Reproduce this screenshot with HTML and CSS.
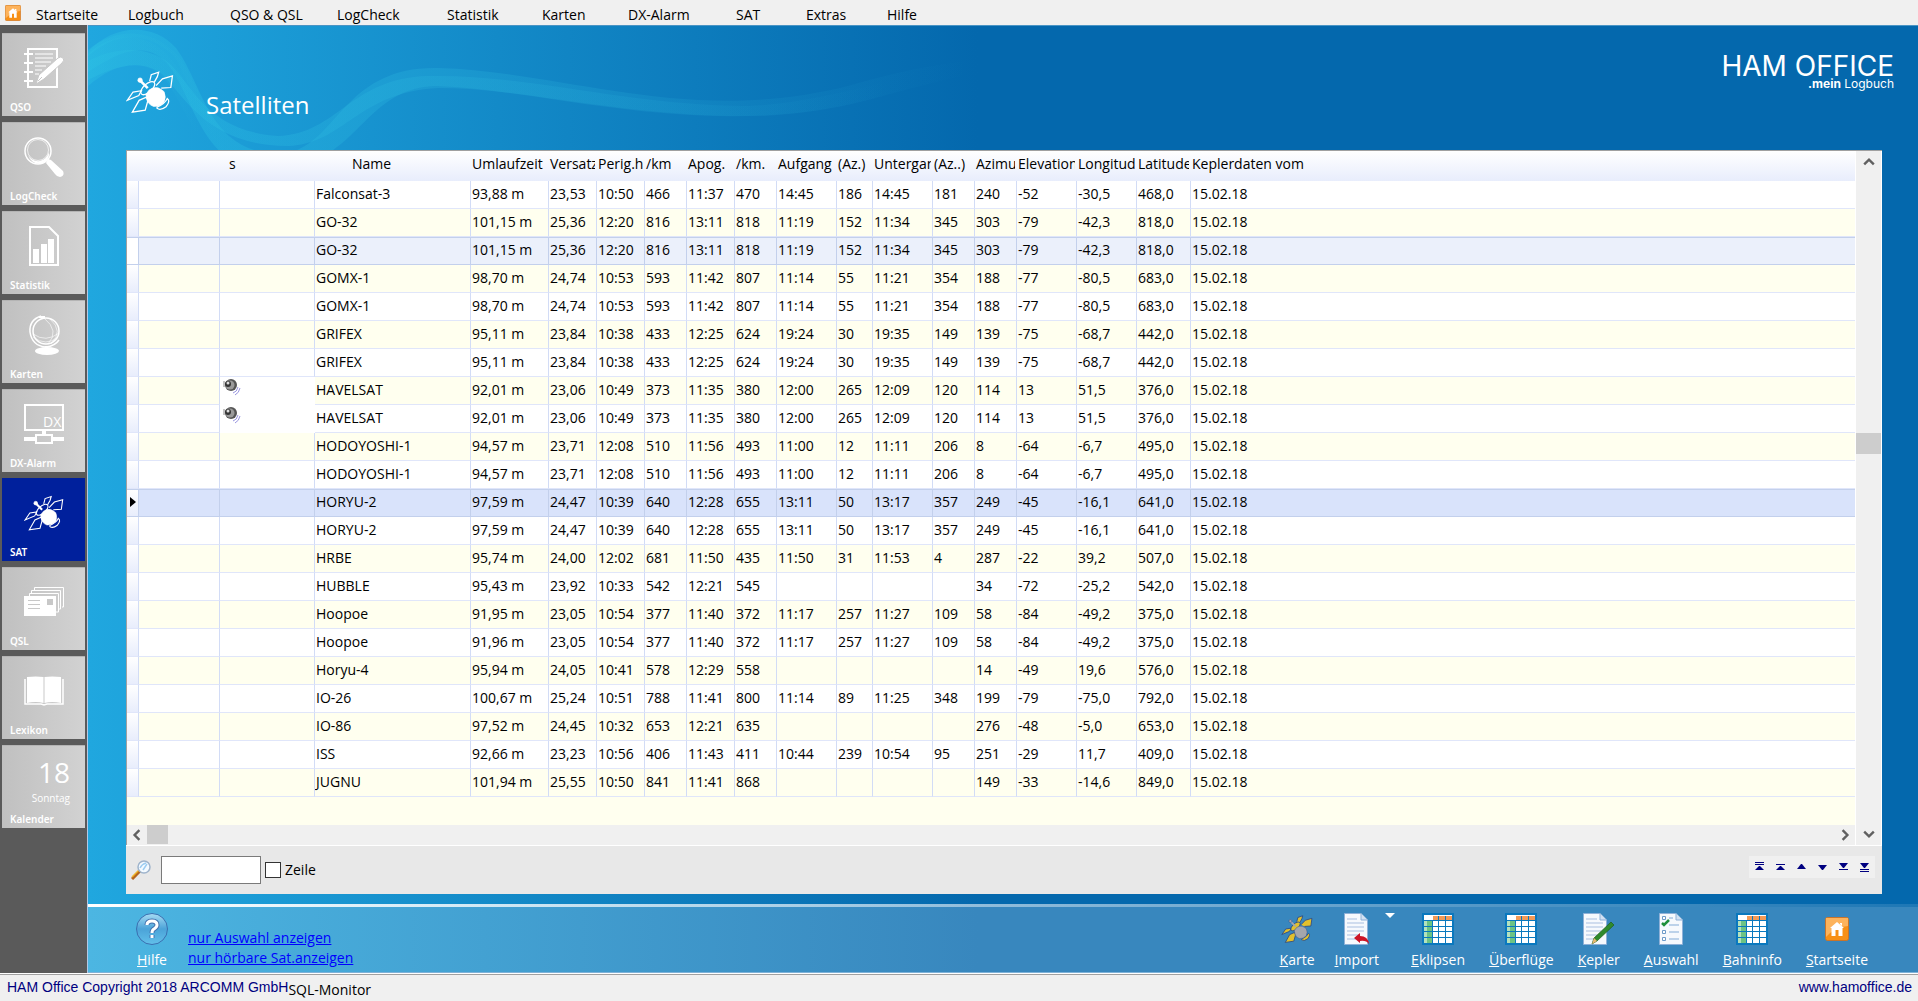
FILE: index.html
```
<!DOCTYPE html>
<html lang="de">
<head>
  <meta charset="UTF-8">
  <meta name="viewport" content="width=device-width, initial-scale=1.0">
  <title>HAM Office - Satelliten</title>
  <link rel="stylesheet" href="styles.css">
</head>

<body>
  <!-- shared icons -->
  <svg class="sprite" aria-hidden="true">
    <symbol id="sat" viewBox="16 24 150 136">
      <g class="sat-panel">
        <path d="M90 58L95 38L118 30L114 44L104 62"/>
        <path d="M110 72L130 51L161 42L156 78L126 80"/>
        <path d="M20 118L38 92L64 88L56 103Z"/>
        <path d="M36 155L57 118L80 108L84 120L76 149Z"/>
        <path d="M113 139Q138 128 145 112Q156 120 141 138Q124 151 113 143Z"/>
      </g>
      <ellipse class="sat-panel" cx="84" cy="80" rx="27" ry="13" transform="rotate(-42 84 80)"/>
      <path class="sat-body" d="M78 100L88 86Q100 76 116 79Q126 83 135 91Q143 108 134 125Q120 139 102 137Q83 130 81 113Z"/>
      <path class="sat-arm" d="M58 54L84 80"/>
      <circle class="sat-body" cx="60" cy="55" r="7"/>
    </symbol>
    <symbol id="house" viewBox="0 0 24 24">
      <rect x="0.5" y="0.5" width="23" height="23" rx="2" fill="#f79016" stroke="#c9742a"/>
      <path d="M1 1H23V9Q10 10 1 20Z" fill="#fdb35c"/>
      <path d="M12 5L19 11H17.500V19H13.500V13H10.500V19H6.500V11H5ZM15 6H17V9L15 7Z" fill="#fff"/>
    </symbol>
    <symbol id="sheet" viewBox="0 0 32 32">
      <rect x="1" y="1" width="30" height="30" fill="#fff" stroke="#0a78be" stroke-width="2"/>
      <rect x="11" y="3" width="19" height="4" fill="#f39a56"/>
      <path d="M2 8H10V30H2Z" fill="#6cc384"/>
      <path d="M2 8H5V30H2Z" fill="#b4e2bd"/>
      <path d="M2 7.500H30M2 13.500H30M2 18.500H30M2 24.500H30" stroke="#0a78be"/>
      <path d="M10.500 8V30M16.500 3V30M23.500 3V30" stroke="#0a78be"/>
    </symbol>
    <symbol id="page" viewBox="0 0 24 32">
      <path d="M0.500 0.500H17L23.500 7V31.500H0.500Z" fill="#f6f9fd" stroke="#8fb1d8"/>
      <path d="M17 0.500V7H23.500" fill="#d3e2f3" stroke="#8fb1d8"/>
    </symbol>
    <symbol id="speaker" viewBox="0 0 18 18">
      <circle cx="8" cy="7" r="6" fill="#555"/>
      <circle cx="7" cy="7" r="4.500" fill="#9a9a9a"/>
      <circle cx="5" cy="6" r="3" fill="#333"/>
      <circle cx="5" cy="5" r="1.500" fill="#ddd"/>
      <path d="M1 3V9" stroke="#888"/>
      <path d="M10 15Q14 14 15 9M12 17Q16 15 17 10" fill="none" stroke="#9a96e0"/>
    </symbol>
  </svg>

  <nav class="menubar">
    <svg class="menu-icon"><use href="#house"/></svg>
    <a href="#">Startseite</a>
    <a href="#">Logbuch</a>
    <a href="#">QSO &amp; QSL</a>
    <a href="#">LogCheck</a>
    <a href="#">Statistik</a>
    <a href="#">Karten</a>
    <a href="#">DX-Alarm</a>
    <a href="#">SAT</a>
    <a href="#">Extras</a>
    <a href="#">Hilfe</a>
  </nav>

  <div class="workspace">
    <aside class="sidebar">
      <button class="tile">
        <svg class="tile-icon" viewBox="0 0 40 40">
          <path d="M4 1H33V39H4Z" fill="none" stroke="#fff" stroke-width="2"/>
          <path d="M0 6H9M0 15H9M0 24H9M0 33H9" stroke="#fff" stroke-width="2"/>
          <path d="M11 6H29M11 10H29M11 14H27M11 18H22M11 22H18M11 26H15" stroke="#fff"/>
          <path d="M12 36L15 27L34 10Q37 8 39 10Q41 12 38 15L20 31Z" fill="#fff" stroke="#c8c8c8"/>
          <path d="M14 33L18 29" stroke="#c8c8c8"/>
        </svg>
        <span>QSO</span>
      </button>
      <button class="tile">
        <svg class="tile-icon" viewBox="0 0 40 40">
          <circle cx="14" cy="14" r="13" fill="none" stroke="#fff" stroke-width="1.500"/>
          <circle cx="14" cy="13" r="10.500" fill="none" stroke="#fff" stroke-width="0.700"/>
          <path d="M4 18Q8 25 16 24Q23 22 25 15Q26 24 17 27Q7 27 4 18Z" fill="#fff"/>
          <path d="M24 22L27 23L39 34Q41 39 36 40Q33 40 31 37L22 26Z" fill="#fff"/>
        </svg>
        <span>LogCheck</span>
      </button>
      <button class="tile">
        <svg class="tile-icon" viewBox="0 0 40 40">
          <path d="M6 1H25L34 10V39H6Z" fill="none" stroke="#fff" stroke-width="2"/>
          <path d="M9 23H15V37H9ZM17 18H23V37H17ZM24 13H30V37H24Z" fill="#fff"/>
        </svg>
        <span>Statistik</span>
      </button>
      <button class="tile">
        <svg class="tile-icon" viewBox="0 0 40 40">
          <circle cx="22" cy="16" r="13" fill="none" stroke="#fff" stroke-width="1.500"/>
          <path d="M17 1Q5 5 6 17Q8 31 22 32Q31 31 35 25" fill="none" stroke="#fff" stroke-width="1.500"/>
          <path d="M20 3Q36 16 24 29M26 4Q40 16 27 29M9 19Q22 28 35 18M9 22Q22 32 34 22" fill="none" stroke="#fff" stroke-width="0.600"/>
          <path d="M15 2L21 2M22 31V36" stroke="#fff" stroke-width="2"/>
          <ellipse cx="23" cy="36" rx="12" ry="4" fill="#fff"/>
        </svg>
        <span>Karten</span>
      </button>
      <button class="tile">
        <svg class="tile-icon" viewBox="0 0 40 40">
          <path d="M1 1H39V26H1Z" fill="none" stroke="#fff" stroke-width="2"/>
          <path d="M20 26V32M0 35H12M28 35H40" stroke="#fff" stroke-width="4"/>
          <path d="M12 31H28V39H12Z" fill="none" stroke="#fff" stroke-width="2"/>
          <text x="19" y="23" class="dx-text">DX</text>
        </svg>
        <span>DX-Alarm</span>
      </button>
      <button class="tile active">
        <svg class="tile-icon"><use href="#sat"/></svg>
        <span>SAT</span>
      </button>
      <button class="tile">
        <svg class="tile-icon" viewBox="0 0 40 40">
          <path d="M10.500 9V5.500H39.500V25H38M7.500 12V8.500H36.500V27H35M5.500 15V11.500H34.500V30H32" fill="none" stroke="#fff"/>
          <path d="M0 14H32V34H0Z" fill="#fff"/>
          <path d="M4 18.500H16M4 22.500H16M4 26.500H16" stroke="#c8c8c8"/>
          <path d="M23 17H29V23H23Z" fill="#c8c8c8"/>
        </svg>
        <span>QSL</span>
      </button>
      <button class="tile">
        <svg class="tile-icon" viewBox="0 0 40 40">
          <path d="M1 8V33H17L20 34L23 33H39V8" fill="none" stroke="#fff" stroke-width="1.500"/>
          <path d="M3 6Q12 5 19.500 6V32Q12 30 3 32ZM37 6Q28 5 20.500 6V32Q28 30 37 32Z" fill="#fff"/>
        </svg>
        <span>Lexikon</span>
      </button>
      <button class="tile tile-calendar">
        <b class="cal-day">18</b>
        <small class="cal-name">Sonntag</small>
        <span>Kalender</span>
      </button>
    </aside>

    <main class="main">
      <svg class="wave" width="1100" height="124" viewBox="0 0 1100 124">
        <defs>
          <linearGradient id="fade">
            <stop offset="0" stop-color="#2cc0e4" stop-opacity="0.4"/>
            <stop offset="0.400" stop-color="#2ab4dc" stop-opacity="0.24"/>
            <stop offset="0.800" stop-color="#2ab4dc" stop-opacity="0"/>
          </linearGradient>
        </defs>
        <g fill="url(#fade)">
          <path d="M0 26C25 -2 65 -4 88 22C116 60 120 125 190 128C250 126 250 40 350 42C480 46 600 100 760 60C860 30 960 20 1100 40V44C960 26 880 46 780 74C620 116 460 64 350 60C280 60 270 130 210 138H150C110 120 100 60 78 36C56 14 30 26 0 46Z"/>
          <path d="M0 35C30 20 60 20 82 38C106 62 120 105 190 110C250 108 262 52 340 50C440 48 540 80 660 80C760 76 840 30 1000 36C860 40 780 88 670 90C540 92 440 62 350 62C270 66 256 118 200 120C120 120 96 70 74 48C50 30 20 44 0 54Z"/>
          <path d="M0 30C30 4 60 6 86 30C106 60 114 112 150 138H170C124 110 116 70 92 32C66 2 30 0 0 24Z"/>
          <path d="M0 28C30 0 72 6 94 50C110 84 120 110 140 124H120C100 100 92 70 74 50C50 30 24 40 0 60Z"/>
        </g>
      </svg>

      <header class="page-head">
        <svg class="head-icon"><use href="#sat"/></svg>
        <h1>Satelliten</h1>
        <div class="brand">
          <div class="brand-name">HAM OFFICE</div>
          <div class="brand-sub"><b>.mein</b> Logbuch</div>
        </div>
      </header>

      <section class="panel">
        <div class="grid-row">
          <div class="grid-area">
            <table class="sat-table">
              <colgroup>
                <col class="w-mark"><col class="w-first"><col class="w-sound"><col class="w-name"><col class="w-orbit">
                <col class="w-m"><col class="w-m"><col class="w-s"><col class="w-m"><col class="w-s"><col class="w-l">
                <col class="w-xs"><col class="w-l"><col class="w-s"><col class="w-s"><col class="w-l"><col class="w-l">
                <col class="w-lat"><col>
              </colgroup>
              <thead>
                <tr><th></th><th></th><th class="th-sound">s</th><th class="th-name">Name</th><th>Umlaufzeit</th><th>Versatz</th><th>Perig.h</th><th>/km</th><th>Apog.</th><th>/km.</th><th>Aufgang</th><th>(Az.)</th><th>Untergang</th><th>(Az..)</th><th>Azimut</th><th>Elevation</th><th>Longitude</th><th>Latitude</th><th>Keplerdaten vom</th></tr>
              </thead>
              <tbody>
                <tr><td></td><td></td><td></td><td>Falconsat-3</td><td>93,88 m</td><td>23,53</td><td>10:50</td><td>466</td><td>11:37</td><td>470</td><td>14:45</td><td>186</td><td>14:45</td><td>181</td><td>240</td><td>-52</td><td>-30,5</td><td>468,0</td><td>15.02.18</td></tr>
                <tr><td></td><td></td><td></td><td>GO-32</td><td>101,15 m</td><td>25,36</td><td>12:20</td><td>816</td><td>13:11</td><td>818</td><td>11:19</td><td>152</td><td>11:34</td><td>345</td><td>303</td><td>-79</td><td>-42,3</td><td>818,0</td><td>15.02.18</td></tr>
                <tr class="hot"><td></td><td></td><td></td><td>GO-32</td><td>101,15 m</td><td>25,36</td><td>12:20</td><td>816</td><td>13:11</td><td>818</td><td>11:19</td><td>152</td><td>11:34</td><td>345</td><td>303</td><td>-79</td><td>-42,3</td><td>818,0</td><td>15.02.18</td></tr>
                <tr><td></td><td></td><td></td><td>GOMX-1</td><td>98,70 m</td><td>24,74</td><td>10:53</td><td>593</td><td>11:42</td><td>807</td><td>11:14</td><td>55</td><td>11:21</td><td>354</td><td>188</td><td>-77</td><td>-80,5</td><td>683,0</td><td>15.02.18</td></tr>
                <tr><td></td><td></td><td></td><td>GOMX-1</td><td>98,70 m</td><td>24,74</td><td>10:53</td><td>593</td><td>11:42</td><td>807</td><td>11:14</td><td>55</td><td>11:21</td><td>354</td><td>188</td><td>-77</td><td>-80,5</td><td>683,0</td><td>15.02.18</td></tr>
                <tr><td></td><td></td><td></td><td>GRIFEX</td><td>95,11 m</td><td>23,84</td><td>10:38</td><td>433</td><td>12:25</td><td>624</td><td>19:24</td><td>30</td><td>19:35</td><td>149</td><td>139</td><td>-75</td><td>-68,7</td><td>442,0</td><td>15.02.18</td></tr>
                <tr><td></td><td></td><td></td><td>GRIFEX</td><td>95,11 m</td><td>23,84</td><td>10:38</td><td>433</td><td>12:25</td><td>624</td><td>19:24</td><td>30</td><td>19:35</td><td>149</td><td>139</td><td>-75</td><td>-68,7</td><td>442,0</td><td>15.02.18</td></tr>
                <tr><td></td><td></td><td class="audible"><svg><use href="#speaker"/></svg></td><td>HAVELSAT</td><td>92,01 m</td><td>23,06</td><td>10:49</td><td>373</td><td>11:35</td><td>380</td><td>12:00</td><td>265</td><td>12:09</td><td>120</td><td>114</td><td>13</td><td>51,5</td><td>376,0</td><td>15.02.18</td></tr>
                <tr><td></td><td></td><td class="audible"><svg><use href="#speaker"/></svg></td><td>HAVELSAT</td><td>92,01 m</td><td>23,06</td><td>10:49</td><td>373</td><td>11:35</td><td>380</td><td>12:00</td><td>265</td><td>12:09</td><td>120</td><td>114</td><td>13</td><td>51,5</td><td>376,0</td><td>15.02.18</td></tr>
                <tr><td></td><td></td><td></td><td>HODOYOSHI-1</td><td>94,57 m</td><td>23,71</td><td>12:08</td><td>510</td><td>11:56</td><td>493</td><td>11:00</td><td>12</td><td>11:11</td><td>206</td><td>8</td><td>-64</td><td>-6,7</td><td>495,0</td><td>15.02.18</td></tr>
                <tr><td></td><td></td><td></td><td>HODOYOSHI-1</td><td>94,57 m</td><td>23,71</td><td>12:08</td><td>510</td><td>11:56</td><td>493</td><td>11:00</td><td>12</td><td>11:11</td><td>206</td><td>8</td><td>-64</td><td>-6,7</td><td>495,0</td><td>15.02.18</td></tr>
                <tr class="current"><td><i class="marker"></i></td><td></td><td></td><td>HORYU-2</td><td>97,59 m</td><td>24,47</td><td>10:39</td><td>640</td><td>12:28</td><td>655</td><td>13:11</td><td>50</td><td>13:17</td><td>357</td><td>249</td><td>-45</td><td>-16,1</td><td>641,0</td><td>15.02.18</td></tr>
                <tr><td></td><td></td><td></td><td>HORYU-2</td><td>97,59 m</td><td>24,47</td><td>10:39</td><td>640</td><td>12:28</td><td>655</td><td>13:11</td><td>50</td><td>13:17</td><td>357</td><td>249</td><td>-45</td><td>-16,1</td><td>641,0</td><td>15.02.18</td></tr>
                <tr><td></td><td></td><td></td><td>HRBE</td><td>95,74 m</td><td>24,00</td><td>12:02</td><td>681</td><td>11:50</td><td>435</td><td>11:50</td><td>31</td><td>11:53</td><td>4</td><td>287</td><td>-22</td><td>39,2</td><td>507,0</td><td>15.02.18</td></tr>
                <tr><td></td><td></td><td></td><td>HUBBLE</td><td>95,43 m</td><td>23,92</td><td>10:33</td><td>542</td><td>12:21</td><td>545</td><td></td><td></td><td></td><td></td><td>34</td><td>-72</td><td>-25,2</td><td>542,0</td><td>15.02.18</td></tr>
                <tr><td></td><td></td><td></td><td>Hoopoe</td><td>91,95 m</td><td>23,05</td><td>10:54</td><td>377</td><td>11:40</td><td>372</td><td>11:17</td><td>257</td><td>11:27</td><td>109</td><td>58</td><td>-84</td><td>-49,2</td><td>375,0</td><td>15.02.18</td></tr>
                <tr><td></td><td></td><td></td><td>Hoopoe</td><td>91,96 m</td><td>23,05</td><td>10:54</td><td>377</td><td>11:40</td><td>372</td><td>11:17</td><td>257</td><td>11:27</td><td>109</td><td>58</td><td>-84</td><td>-49,2</td><td>375,0</td><td>15.02.18</td></tr>
                <tr><td></td><td></td><td></td><td>Horyu-4</td><td>95,94 m</td><td>24,05</td><td>10:41</td><td>578</td><td>12:29</td><td>558</td><td></td><td></td><td></td><td></td><td>14</td><td>-49</td><td>19,6</td><td>576,0</td><td>15.02.18</td></tr>
                <tr><td></td><td></td><td></td><td>IO-26</td><td>100,67 m</td><td>25,24</td><td>10:51</td><td>788</td><td>11:41</td><td>800</td><td>11:14</td><td>89</td><td>11:25</td><td>348</td><td>199</td><td>-79</td><td>-75,0</td><td>792,0</td><td>15.02.18</td></tr>
                <tr><td></td><td></td><td></td><td>IO-86</td><td>97,52 m</td><td>24,45</td><td>10:32</td><td>653</td><td>12:21</td><td>635</td><td></td><td></td><td></td><td></td><td>276</td><td>-48</td><td>-5,0</td><td>653,0</td><td>15.02.18</td></tr>
                <tr><td></td><td></td><td></td><td>ISS</td><td>92,66 m</td><td>23,23</td><td>10:56</td><td>406</td><td>11:43</td><td>411</td><td>10:44</td><td>239</td><td>10:54</td><td>95</td><td>251</td><td>-29</td><td>11,7</td><td>409,0</td><td>15.02.18</td></tr>
                <tr><td></td><td></td><td></td><td>JUGNU</td><td>101,94 m</td><td>25,55</td><td>10:50</td><td>841</td><td>11:41</td><td>868</td><td></td><td></td><td></td><td></td><td>149</td><td>-33</td><td>-14,6</td><td>849,0</td><td>15.02.18</td></tr>
              </tbody>
            </table>
            <div class="hscroll">
              <button aria-label="links"><svg viewBox="0 0 10 10"><path d="M7 1L3 5L7 9"/></svg></button>
              <div class="hthumb"></div>
              <button class="right" aria-label="rechts"><svg viewBox="0 0 10 10"><path d="M3 1L7 5L3 9"/></svg></button>
            </div>
          </div>
          <div class="vscroll">
            <button aria-label="hoch"><svg viewBox="0 0 10 10"><path d="M1 7L5 3L9 7"/></svg></button>
            <div class="vtrack"><div class="vthumb"></div></div>
            <button aria-label="runter"><svg viewBox="0 0 10 10"><path d="M1 3L5 7L9 3"/></svg></button>
          </div>
        </div>

        <div class="panel-foot">
          <svg class="search-icon" viewBox="0 0 20 20">
            <path d="M1 19L9 11" stroke="#b5651d" stroke-width="3"/>
            <path d="M1 17L8 10" stroke="#f0b429" stroke-width="1.500"/>
            <circle cx="13" cy="7" r="6" fill="#f4faff" stroke="#9fb4cc" stroke-width="1.500"/>
            <path d="M9 8Q11 4 15 3M12 10L16 4" fill="none" stroke="#9ccdf2" stroke-width="1.500"/>
          </svg>
          <input type="text" class="search" aria-label="Suche">
          <input type="checkbox" id="zeile" class="check">
          <label for="zeile">Zeile</label>
          <div class="navigator">
            <button aria-label="Anfang"><svg viewBox="0 0 10 12"><path d="M0 1H9V2H0ZM0 3H9V4H0ZM0 9H9L5 5H4Z"/></svg></button>
            <button aria-label="Seite hoch"><svg viewBox="0 0 10 12"><path d="M0 3H9V4H0ZM0 9H9L5 5H4Z"/></svg></button>
            <button aria-label="Zeile hoch"><svg viewBox="0 0 10 12"><path d="M0 8H9L5 3H4Z"/></svg></button>
            <button aria-label="Zeile runter"><svg viewBox="0 0 10 12"><path d="M0 4H9L5 9H4Z"/></svg></button>
            <button aria-label="Seite runter"><svg viewBox="0 0 10 12"><path d="M0 2H9L5 7H4ZM0 8H9V9H0Z"/></svg></button>
            <button aria-label="Ende"><svg viewBox="0 0 10 12"><path d="M0 2H9L5 7H4ZM0 8H9V9H0ZM0 10H9V11H0Z"/></svg></button>
          </div>
        </div>
      </section>

      <footer class="toolbar">
        <button class="tool tool-help">
          <svg viewBox="0 0 32 32">
            <defs>
              <linearGradient id="helpFill" x2="0" y2="1">
                <stop offset="0" stop-color="#a8dcf4"/>
                <stop offset="0.500" stop-color="#4ba3d8"/>
                <stop offset="1" stop-color="#62c0ea"/>
              </linearGradient>
            </defs>
            <circle cx="16" cy="16" r="15.500" fill="url(#helpFill)" stroke="#3a6fb0"/>
            <path d="M11 12Q11 8 16 8Q21 8 21 12Q21 14 18 16Q16 17 16 20M16 22V25" fill="none" stroke="#4272ae" stroke-width="5"/>
            <path d="M11 12Q11 8 16 8Q21 8 21 12Q21 14 18 16Q16 17 16 20M16 22V25" fill="none" stroke="#fff" stroke-width="3"/>
          </svg>
          <span><u>H</u>ilfe</span>
        </button>
        <div class="links">
          <a href="#">nur Auswahl anzeigen</a>
          <a href="#">nur hörbare Sat.anzeigen</a>
        </div>
        <div class="tools">
          <button class="tool tool-sat"><svg><use href="#sat"/></svg><span><u>K</u>arte</span></button>
          <div class="split">
            <button class="tool">
              <svg viewBox="0 0 32 32">
                <use href="#page" x="3" width="24" height="32"/>
                <path d="M6 6H16M6 10H23M6 14H23M6 18H23M6 22H19M6 26H15" stroke="#a9bfe0"/>
                <path d="M13 25L19 20V23Q27 23 28 31Q25 27 19 28V30Z" fill="#cc1426"/>
              </svg>
              <span><u>I</u>mport</span>
            </button>
            <button class="caret" aria-label="Import Optionen"></button>
          </div>
          <button class="tool"><svg><use href="#sheet"/></svg><span><u>E</u>klipsen</span></button>
          <button class="tool"><svg><use href="#sheet"/></svg><span><u>Ü</u>berflüge</span></button>
          <button class="tool">
            <svg viewBox="0 0 32 32">
              <use href="#page" width="24" height="32"/>
              <path d="M3 6H14M3 10H20M3 14H20M3 18H18M3 22H14M3 26H11" stroke="#a9bfe0"/>
              <path d="M9 31L11 25L28 9L31 12L14 28Z" fill="#2f8a2c" stroke="#1d5c1c" stroke-width="0.700"/>
              <path d="M9 31L11 25L14 28Z" fill="#e9b872"/>
            </svg>
            <span><u>K</u>epler</span>
          </button>
          <button class="tool">
            <svg viewBox="0 0 32 32">
              <use href="#page" x="4" width="24" height="32"/>
              <path d="M7.500 3.500H10.500V6.500H7.500ZM7.500 17.500H10.500V20.500H7.500ZM7.500 24.500H10.500V27.500H7.500Z" fill="#fff" stroke="#6d9bc9"/>
              <path d="M14 5H18M14 12H24M14 19H24M14 26H24" stroke="#bcd2ea" stroke-width="2"/>
              <path d="M7 10L9 12L14 7" fill="none" stroke="#1f8f3a" stroke-width="2.500"/>
            </svg>
            <span><u>A</u>uswahl</span>
          </button>
          <button class="tool"><svg><use href="#sheet"/></svg><span><u>B</u>ahninfo</span></button>
          <button class="tool tool-home"><svg><use href="#house"/></svg><span><u>S</u>tartseite</span></button>
        </div>
      </footer>
    </main>
  </div>

  <div class="statusbar">
    <span class="copyright">HAM Office Copyright 2018 ARCOMM GmbH</span>
    <span class="monitor">SQL-Monitor</span>
    <a class="site" href="#">www.hamoffice.de</a>
  </div>
</body>

</html>
```
FILE: styles.css
```
* {
  box-sizing: border-box;
}

body {
  display: flex;
  flex-direction: column;
  min-height: 100vh;
  margin: 0;
  background-color: #f0f0f0;
  font-family: "Open Sans", "Noto Sans", sans-serif;
  font-size: 14px;
  line-height: 20px;
  color: #000;
}

button {
  padding: 0;
  border: none;
  background: none;
  font: inherit;
  color: inherit;
}

.sprite {
  position: absolute;
  width: 0;
  height: 0;
}

/* menu */

.menubar {
  display: grid;
  grid-template-columns: 31px 92px 102px 107px 110px 95px 86px 108px 70px 81px auto;
  align-items: center;
  height: 25px;
  padding: 4px 0 0 5px;
}

.menubar a {
  color: #000;
  text-decoration: none;
}

.menu-icon {
  width: 16px;
  height: 16px;
  margin-bottom: 3px;
}

.workspace {
  flex: 1;
  display: flex;
}

/* sidebar */

.sidebar {
  display: flex;
  flex-direction: column;
  gap: 6px;
  width: 88px;
  padding: 8px 2px 0 2px;
  background-color: #5a5a5a;
  border-right: 1px solid #b4c8e6;
}

.tile {
  display: flex;
  flex-direction: column;
  align-items: center;
  justify-content: space-between;
  height: 83px;
  padding: 14px 0 1px;
  background: linear-gradient(90deg, #c0c0c0, #d2d2d2);
  border-top: 1px solid #b4b4b4;
  color: #fff;
}

.tile span {
  align-self: flex-start;
  padding-left: 8px;
  font-family: "Noto Sans", sans-serif;
  font-size: 10px;
  font-weight: 600;
  line-height: 16px;
}

.tile.active {
  background: #00209c;
  border-color: #00209c;
}

.tile-icon {
  width: 40px;
  height: 40px;
}

.dx-text {
  font-size: 14px;
  fill: #fff;
}

.tile-calendar {
  padding-top: 10px;
}

.tile .cal-day,
.tile .cal-name {
  align-self: flex-end;
  padding-right: 15px;
  font-weight: 400;
}

.cal-day {
  font-size: 28px;
  line-height: 32px;
}

.cal-name {
  font-size: 10px;
  line-height: 12px;
  margin-bottom: 4px;
}

/* satellite drawing */

.sat-panel {
  fill: var(--panel, none);
  stroke: var(--line, #fff);
  stroke-width: 4;
}

.sat-body {
  fill: var(--dish, #fff);
  stroke: var(--line, #fff);
  stroke-width: 2;
}

.sat-arm {
  stroke: var(--dish, #fff);
  stroke-width: 8;
}

/* main area */

.main {
  position: relative;
  flex: 1;
  display: flex;
  flex-direction: column;
  min-width: 0;
  background: linear-gradient(90deg, #20a7df, #0468ad 890px);
  border-top: 1px solid #4a94c4;
}

.wave {
  position: absolute;
  top: 0;
  left: 0;
}

.page-head {
  position: relative;
  display: flex;
  height: 124px;
  padding: 28px 24px 0 38px;
  color: #fff;
}

.head-icon {
  width: 48px;
  height: 44px;
  margin-top: 16px;
}

.page-head h1 {
  margin: 35px 0 0 32px;
  font-size: 24px;
  font-weight: 400;
  line-height: 32px;
}

.brand {
  margin-left: auto;
  text-align: right;
}

.brand-name {
  font-family: Inter, sans-serif;
  font-size: 28px;
  line-height: 24px;
}

.brand-sub {
  font-family: Inter, sans-serif;
  font-size: 12px;
  line-height: 12px;
}

.panel {
  position: relative;
  flex: 1;
  display: flex;
  flex-direction: column;
  margin: 0 36px 13px 38px;
}

.grid-row {
  flex: 1;
  display: flex;
  border: solid #a0a0a0;
  border-width: 1px 0 0 1px;
}

.grid-area {
  flex: 1;
  display: flex;
  flex-direction: column;
  min-width: 0;
  background-color: #ffffef;
}

.sat-table {
  width: 100%;
  table-layout: fixed;
  border-spacing: 0;
}

.w-mark { width: 12px; }
.w-first { width: 81px; }
.w-sound { width: 95px; }
.w-name { width: 156px; }
.w-orbit { width: 78px; }
.w-xs { width: 36px; }
.w-s { width: 42px; }
.w-m { width: 48px; }
.w-lat { width: 54px; }
.w-l { width: 60px; }

.sat-table th,
.sat-table td {
  padding: 0 0 0 1px;
  overflow: hidden;
  font-weight: 400;
  text-align: left;
  white-space: nowrap;
}

.sat-table thead tr {
  background: linear-gradient(#fff, #e8edfc);
}

.sat-table th {
  height: 30px;
  padding-bottom: 4px;
  border-right: 2px solid transparent;
}

.sat-table .th-sound {
  padding-left: 9px;
}

.sat-table .th-name {
  padding-left: 37px;
}

.sat-table td {
  height: 28px;
  padding-bottom: 2px;
  border-right: 1px solid #d2dcf6;
  border-bottom: 1px solid #e0e6fa;
}

.sat-table td:last-child {
  border-right: none;
}

.sat-table tbody tr {
  background-color: #fff;
}

.sat-table tbody tr:nth-child(even) {
  background-color: #ffffef;
}

.sat-table td:first-child {
  background: linear-gradient(#fff, #e8edfc);
}

.sat-table tbody tr.hot {
  background-color: #ebf0fb;
}

.sat-table .hot td:first-child {
  background: #fff;
}

.sat-table tbody tr.current:nth-child(even) {
  background-color: #d9e3fb;
}

.sat-table .hot td,
.sat-table .current td {
  border-color: #c3d0ec;
  border-top: 1px solid #c3d0ec;
}

.sat-table .audible {
  padding-left: 3px;
  background-color: #fff;
  border-color: #fff;
}

.audible svg {
  display: block;
  width: 18px;
  height: 18px;
  margin-bottom: 6px;
}

.marker {
  display: block;
  width: 6px;
  margin-left: 2px;
  border: solid transparent;
  border-width: 5px 0 5px 6px;
  border-left-color: #000;
}

/* scroll bars */

.hscroll,
.vscroll {
  display: flex;
  background-color: #f0f0f0;
}

.hscroll {
  height: 20px;
  margin-top: auto;
}

.vscroll {
  flex-direction: column;
  width: 27px;
  border: solid #fff;
  border-width: 0 1px;
}

.hscroll button,
.vscroll button {
  display: flex;
  align-items: center;
  justify-content: center;
  width: 20px;
}

.vscroll button {
  width: auto;
  height: 22px;
}

.hscroll .right {
  margin-left: auto;
}

.hscroll svg,
.vscroll svg {
  width: 12px;
  height: 12px;
  fill: none;
  stroke: #606060;
  stroke-width: 2;
}

.hthumb {
  width: 21px;
  margin-bottom: 1px;
  background-color: #cdcdcd;
}

.vtrack {
  position: relative;
  flex: 1;
}

.vthumb {
  position: absolute;
  top: 40%;
  width: 100%;
  height: 21px;
  background-color: #cdcdcd;
}

/* panel footer */

.panel-foot {
  display: flex;
  align-items: center;
  height: 49px;
  padding: 0 7px 0 5px;
  background-color: #e8e8e8;
  border-top: 1px solid #fff;
}

.search-icon {
  width: 20px;
  height: 20px;
}

.search {
  width: 100px;
  height: 28px;
  margin: 0 4px 0 10px;
  padding: 0 4px;
  border: 1px solid #7a7a7a;
  background-color: #fff;
  font: inherit;
}

.check {
  appearance: none;
  width: 16px;
  height: 16px;
  margin: 0 4px 0 0;
  border: 1px solid #333;
  background-color: #fff;
}

.navigator {
  display: flex;
  align-self: flex-start;
  height: 22px;
  margin: 10px 0 0 auto;
  background-color: #f0f0f0;
}

.navigator button {
  display: flex;
  align-items: center;
  justify-content: center;
  width: 21px;
}

.navigator svg {
  width: 10px;
  height: 12px;
  fill: #000080;
}

/* toolbar */

.toolbar {
  position: relative;
  display: flex;
  height: 67px;
  padding: 6px 50px 0 44px;
  background: linear-gradient(90deg, #4cb6e2, #3887be 890px);
  border-bottom: 2px solid #7fb2d8;
  color: #fff;
}

.toolbar::before {
  content: "";
  position: absolute;
  top: -3px;
  left: 0;
  right: 0;
  height: 3px;
  background: linear-gradient(90deg, #fff, rgba(255, 255, 255, 0.1));
}

.tool {
  display: flex;
  flex-direction: column;
  align-items: center;
  gap: 5px;
  height: 58px;
}

.tool svg {
  width: 32px;
  height: 32px;
}

.tool-home svg {
  width: 24px;
}

.tool-sat {
  --panel: #e2c02c;
  --line: #2c4a86;
  --dish: #a4a6ac;
}

.tool-help {
  min-width: 40px;
}

.links {
  display: flex;
  flex-direction: column;
  margin: 15px 0 0 16px;
}

.links a {
  color: #00f;
}

.tools {
  display: flex;
  gap: 24px;
  margin-left: auto;
}

.split {
  position: relative;
  margin: 0 8px 0 -4px;
}

.caret {
  position: absolute;
  top: 0;
  right: -16px;
  border: solid transparent;
  border-width: 5px 5px 0;
  border-top-color: #fff;
}

/* status bar */

.statusbar {
  position: relative;
  display: flex;
  height: 27px;
  padding: 2px 6px 0 7px;
  border-top: 1px solid #a0a0a0;
  box-shadow: 0 -1px #fff;
}

.copyright,
.site {
  font-family: "Liberation Sans", Arial, sans-serif;
  color: #000080;
}

.monitor {
  padding-top: 3px;
}

.site {
  margin-left: auto;
  text-decoration: none;
}
```
